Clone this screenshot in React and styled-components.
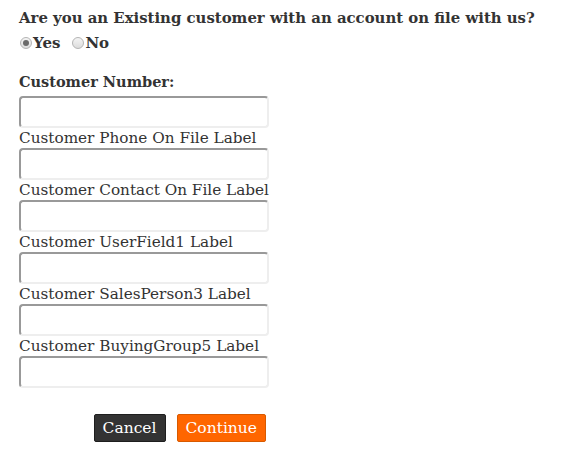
import React from 'react';
import styled, { createGlobalStyle } from 'styled-components';

const GlobalStyle = createGlobalStyle`
  body {
    margin: 0;
    background: #fff;
    font-family: "DejaVu Serif", serif;
    color: #333;
  }
`;

const Form = styled.form`
  padding: 8px 19px;
  width: 249px;
`;

const Question = styled.div`
  font-size: 14.9px;
  font-weight: bold;
  line-height: 20px;
  white-space: nowrap;
`;

const RadioRow = styled.div`
  display: flex;
  align-items: center;
  margin-top: 6px;
  font-size: 15px;
  font-weight: bold;
  line-height: 18px;
`;

const RadioLabel = styled.label`
  display: flex;
  align-items: center;
  margin-right: 11px;
`;

const Radio = styled.input`
  appearance: none;
  box-sizing: border-box;
  margin: 0 1px 0 1px;
  width: 12px;
  height: 12px;
  border-radius: 50%;
  border: 1px solid #b4b4b4;
  background: linear-gradient(#f4f4f4, #dcdcdc);
  position: relative;

  &:checked::after {
    content: '';
    position: absolute;
    left: 2px;
    top: 2px;
    width: 6px;
    height: 6px;
    border-radius: 50%;
    background: #6a6a6a;
  }
`;

const FieldLabel = styled.label`
  display: block;
  font-size: ${(p) => (p.strong ? '14.5px' : '15.25px')};
  line-height: 20px;
  font-weight: ${(p) => (p.strong ? 'bold' : 'normal')};
  margin-top: ${(p) => (p.strong ? '20px' : '0')};
  margin-bottom: ${(p) => (p.strong ? '4px' : '0')};
  white-space: nowrap;
`;

const TextInput = styled.input`
  display: block;
  box-sizing: border-box;
  width: 250px;
  height: 32px;
  margin: 0;
  border-style: solid;
  border-width: 2px;
  border-color: #999 #eee #eee #999;
  border-radius: 4px;
  background: #fff;
`;

const Actions = styled.div`
  display: flex;
  justify-content: flex-end;
  gap: 11px;
  margin-top: 26px;
  padding-right: 2px;
`;

const Button = styled.button`
  font-family: "DejaVu Serif", serif;
  font-size: 15.5px;
  height: 28px;
  padding: 0 8px;
  border-radius: 2px;
  border: 1px solid ${(p) => (p.primary ? '#d85a00' : '#1e1e1e')};
  background: ${(p) => (p.primary ? '#ff6600' : '#333')};
  color: #fff;
  cursor: pointer;
`;

const fields = [
  'Customer Phone On File Label',
  'Customer Contact On File Label',
  'Customer UserField1 Label',
  'Customer SalesPerson3 Label',
  'Customer BuyingGroup5 Label',
];

export default function App() {
  return (
    <>
      <GlobalStyle />
      <Form>
        <Question>Are you an Existing customer with an account on file with us?</Question>
        <RadioRow>
          <RadioLabel>
            <Radio type="radio" name="existing" defaultChecked />
            Yes
          </RadioLabel>
          <RadioLabel>
            <Radio type="radio" name="existing" />
            No
          </RadioLabel>
        </RadioRow>
        <FieldLabel strong htmlFor="custnum">Customer Number:</FieldLabel>
        <TextInput id="custnum" type="text" />
        {fields.map((f, i) => (
          <React.Fragment key={f}>
            <FieldLabel htmlFor={`f${i}`}>{f}</FieldLabel>
            <TextInput id={`f${i}`} type="text" />
          </React.Fragment>
        ))}
        <Actions>
          <Button type="button">Cancel</Button>
          <Button type="button" primary>Continue</Button>
        </Actions>
      </Form>
    </>
  );
}
